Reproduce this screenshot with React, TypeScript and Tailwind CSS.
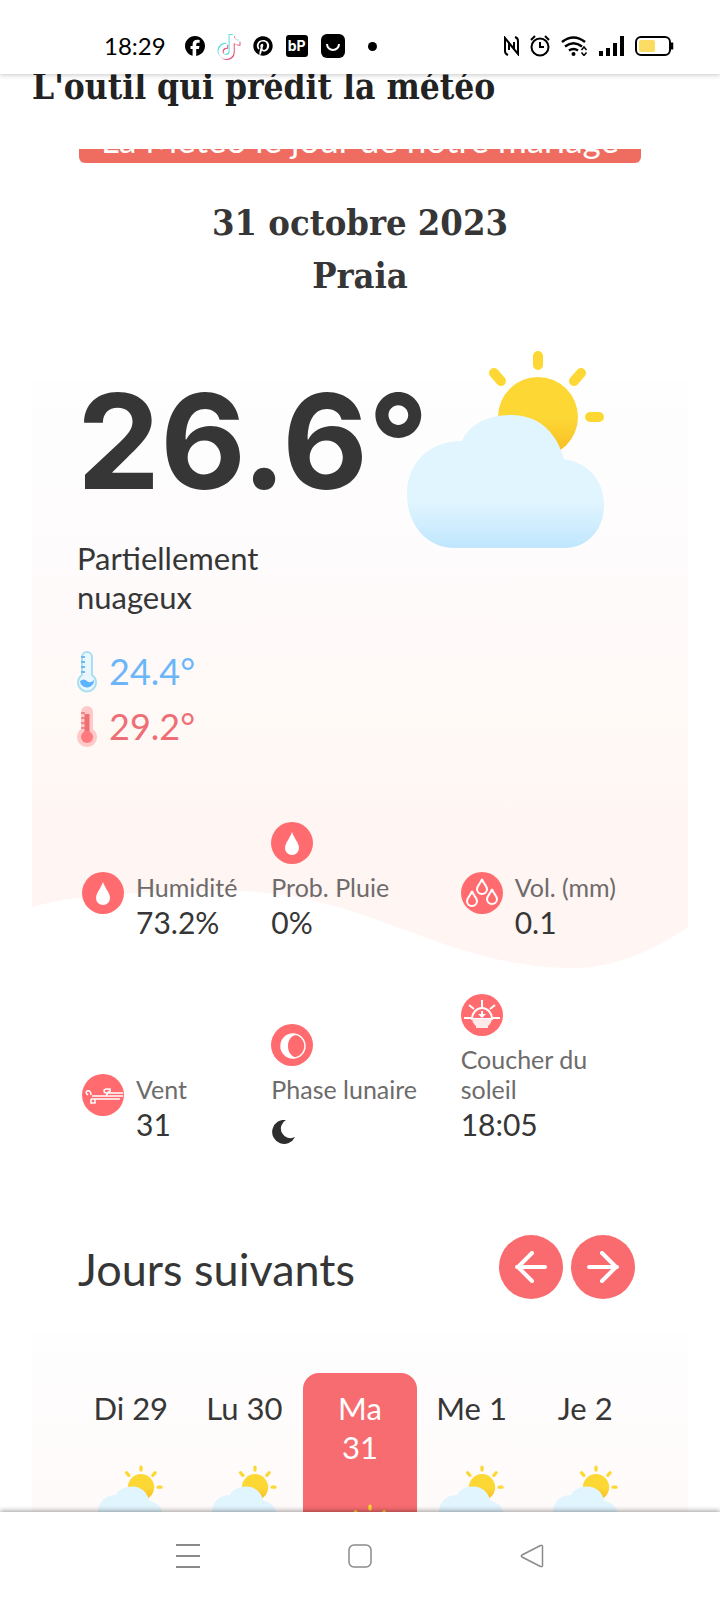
import { ReactNode, useId } from "react";
import { FaFacebook, FaPinterest, FaTiktok } from "react-icons/fa6";

const DAYS = [
  { name: "Di", date: 29 },
  { name: "Lu", date: 30 },
  { name: "Ma", date: 31, selected: true },
  { name: "Me", date: 1 },
  { name: "Je", date: 2 },
];

const WeatherIcon = ({ className }: { className: string }) => {
  const id = useId();

  return (
    <svg viewBox="0 0 198 200" className={className} aria-hidden="true">
      <defs>
        <linearGradient id={`${id}-sun`} x1="0" y1="0" x2="0" y2="1">
          <stop offset="0.5" stopColor="#fdd835" />
          <stop offset="1" stopColor="#f6bb22" />
        </linearGradient>
        <linearGradient id={`${id}-cloud`} x1="0" y1="0" x2="0" y2="1">
          <stop offset="0.65" stopColor="#e1f5fe" />
          <stop offset="1" stopColor="#bfe6fd" />
        </linearGradient>
      </defs>
      <g stroke="#fdd835" strokeWidth="10" strokeLinecap="round">
        <path d="M131 6v9M87 23l7 8M174 23l-7 8M183 67h9" />
      </g>
      <circle cx="131" cy="67" r="40" fill={`url(#${id}-sun)`} />
      <path
        d="M48 198C18 198 0 173 0 144C0 113 22 91 55 91C62 74 82 65 104 65C131 65 149 81 157 109C183 113 197 132 197 155C197 180 180 198 158 198Z"
        fill={`url(#${id}-cloud)`}
      />
    </svg>
  );
};

const ColdThermometer = () => (
  <svg viewBox="0 0 20 42" className="h-[42px] w-5" aria-hidden="true">
    <path
      d="M5 6a5 5 0 0 1 10 0v18a9 9 0 1 1-10 0z"
      fill="#e9f7fd"
      stroke="#a9dff0"
      strokeWidth="2"
    />
    <path d="M4 6h4M4 11h4M4 16h4M4 21h4" stroke="#6fb9f0" strokeWidth="2" />
    <path d="M3 30q4-3 7 0t7-1a7 7 0 1 1-14 1" fill="#5cb3ff" />
  </svg>
);

const HotThermometer = () => (
  <svg viewBox="0 0 20 42" className="h-[42px] w-5" aria-hidden="true">
    <path d="M4 6a6 6 0 0 1 12 0v17a10 10 0 1 1-12 0z" fill="#ffc9c9" />
    <path d="M4 7h4M4 12h4M4 17h4M4 22h4" stroke="#f08a8a" strokeWidth="2" />
    <path d="M10 8v22" stroke="#ee7073" strokeWidth="5" />
    <circle cx="10" cy="31" r="6" fill="#ff7a7e" />
  </svg>
);

const Badge = ({ children }: { children: ReactNode }) => (
  <svg
    viewBox="0 0 42 42"
    className="h-[42px] w-[42px] shrink-0"
    fill="none"
    stroke="white"
    aria-hidden="true"
  >
    <circle cx="21" cy="21" r="21" fill="#ff6b6e" stroke="none" />
    {children}
  </svg>
);

const DropBadge = () => (
  <Badge>
    <path
      d="M21 10c2 6 7 11 7 16a7 7 0 0 1-14 0c0-5 5-10 7-16z"
      fill="white"
      stroke="none"
    />
  </Badge>
);

const DropsBadge = () => (
  <Badge>
    <g strokeWidth="2">
      <path d="M21 7c1 4 5 7 5 10a5 5 0 0 1-10 0c0-3 4-6 5-10z" />
      <path d="M11 19c1 4 5 7 5 10a5 5 0 0 1-10 0c0-3 4-6 5-10z" />
      <path d="M31 17c1 4 5 7 5 10a5 5 0 0 1-10 0c0-3 4-6 5-10z" />
    </g>
  </Badge>
);

const WindBadge = () => (
  <Badge>
    <g strokeWidth="1.5">
      <path d="M41 19H25q-3 0-3-2t3-2h3v4M24 22l3-5" />
      <path d="M41 22H10M38 25H9M9 25v4h4v-4" />
      <path d="M6 21q-3-2-1-4 4-1 4 4" />
    </g>
  </Badge>
);

const MoonBadge = () => (
  <Badge>
    <circle cx="22" cy="22" r="12" strokeWidth="1.5" />
    <path
      d="M22 10a12 12 0 1 0 3 23.600C20 32 17 28 17 22s3-10 8-11z"
      fill="white"
      stroke="none"
    />
  </Badge>
);

const SunsetBadge = () => (
  <Badge>
    <g strokeWidth="2">
      <path d="M3 24h7M32 24h7M21 6v7M8 11l5 4M34 11l-5 4" />
      <path d="M11 25a10 11 0 0 1 20 0z" />
    </g>
    <path d="M20 17h2v3h3l-4 4-4-4h3z" fill="white" stroke="none" />
    <path d="M11 25h20q-1 5-4 7v2H15v-2q-3-2-4-7z" fill="#ffe9e9" stroke="none" />
  </Badge>
);

type MetricProps = {
  icon: ReactNode;
  label: string;
  value: ReactNode;
  stacked?: boolean;
};

const Metric = ({ icon, label, value, stacked }: MetricProps) => (
  <div className={stacked ? "flex flex-col gap-2" : "flex items-start gap-3"}>
    {icon}
    <dl>
      <dt className="max-w-40 text-[25px] leading-[30px] text-[#6e6b6b]">
        {label}
      </dt>
      <dd className="text-[30px] leading-10">{value}</dd>
    </dl>
  </div>
);

const StatusBar = () => (
  <header className="relative z-10 flex h-[74px] shrink-0 items-center justify-between bg-white pt-[18px] pr-[46px] pl-[104px] text-black shadow-[0_1px_5px_rgba(0,0,0,0.22)]">
    <div className="flex items-center gap-[13px]">
      <span className="mr-1.5 text-[24px] leading-6">18:29</span>
      <FaFacebook className="h-5 w-5" />
      <span className="relative h-6 w-[22px]">
        <FaTiktok className="absolute top-0 -left-px h-6 w-[22px] text-[#5be0dc]" />
        <FaTiktok className="absolute top-0.5 left-px h-6 w-[22px] text-[#e0557f]" />
        <FaTiktok className="absolute top-px left-0 h-6 w-[22px] text-white" />
      </span>
      <FaPinterest className="h-5 w-5" />
      <span className="flex h-[22px] w-[22px] items-center justify-center rounded-[3px] bg-black font-[Inter] text-[14px] leading-4 font-bold text-white">
        bP
      </span>
      <svg viewBox="0 0 24 24" className="h-6 w-6">
        <rect width="24" height="24" rx="6" />
        <path d="M6 10a6 6 0 0 0 12 0" fill="none" stroke="white" strokeWidth="2" />
      </svg>
      <span className="ml-2.5 h-[9px] w-[9px] rounded-full bg-black" />
    </div>

    <div className="flex items-center gap-[11px]">
      <svg viewBox="0 0 15 20" className="h-5 w-[15px]" fill="none" stroke="black" strokeWidth="2">
        <path d="M4 19Q1 18 1 15V2l9 11V6M11 1q3 1 3 4v13L5 7v7" />
      </svg>
      <svg viewBox="0 0 20 22" className="h-[22px] w-5" fill="none" stroke="black" strokeWidth="2">
        <circle cx="10" cy="12" r="8.500" />
        <path d="M10 7v5h4M1 5l4-4M19 5l-4-4" />
      </svg>
      <svg viewBox="0 0 27 20" className="h-5 w-[27px]" fill="none" stroke="black">
        <path d="M1 6q11.500-9 23 0M4 10.500q8.500-6.500 17 0M8 14.500q4.500-3 9 0" strokeWidth="2.500" />
        <circle cx="12.500" cy="18" r="2" fill="black" stroke="none" />
        <path d="M20.500 14l2.500-3 2.500 3M20.500 16.500l2.500 3 2.500-3" strokeWidth="1.500" />
      </svg>
      <svg viewBox="0 0 25 20" className="h-5 w-[25px]" stroke="black" strokeWidth="4">
        <path d="M2 20v-5M9 20v-8M16 20V7M23 20V0" />
      </svg>
      <svg viewBox="0 0 39 20" className="h-5 w-[39px]">
        <rect x="1" y="1" width="34" height="18" rx="5" fill="none" stroke="black" strokeWidth="2" />
        <rect x="4" y="4" width="16" height="12" rx="2" fill="#fbdc63" />
        <path d="M37 6.500v7" stroke="black" strokeWidth="2.500" />
      </svg>
    </div>
  </header>
);

const NavBar = () => (
  <nav className="relative z-10 flex h-[88px] shrink-0 items-center justify-center gap-[148px] bg-white text-[#8a8a8a] shadow-[0_-1px_5px_rgba(0,0,0,0.4)]">
    <button type="button" aria-label="Applications récentes">
      <svg viewBox="0 0 24 24" className="h-6 w-6" stroke="currentColor" strokeWidth="2">
        <path d="M0 1h24M0 12h24M0 23h24" />
      </svg>
    </button>
    <button type="button" aria-label="Accueil">
      <svg viewBox="0 0 24 24" className="h-6 w-6" fill="none" stroke="currentColor" strokeWidth="1.5">
        <rect x="1" y="1" width="22" height="22" rx="5" />
      </svg>
    </button>
    <button type="button" aria-label="Retour">
      <svg viewBox="0 0 24 24" className="h-6 w-6" fill="none" stroke="currentColor" strokeWidth="1.5">
        <path d="M22.500 2.500v19q0 1.500-2 1L2 13q-1.500-1 0-2L20.500 1.500q2-.500 2 1z" />
      </svg>
    </button>
  </nav>
);

const CurrentWeather = () => (
  <section className="relative mx-8 mt-[47px] text-[#363636]">
    <svg
      viewBox="0 0 656 590"
      preserveAspectRatio="none"
      className="absolute top-[30px] left-0 h-[590px] w-full"
      aria-hidden="true"
    >
      <defs>
        <linearGradient id="card-fill" x1="0" y1="0" x2="0" y2="1">
          <stop offset="0" stopColor="#fefefe" />
          <stop offset="0.25" stopColor="#fefcfd" />
          <stop offset="0.45" stopColor="#fff9f9" />
          <stop offset="0.6" stopColor="#fff9f6" />
          <stop offset="0.78" stopColor="#fff5f3" />
        </linearGradient>
      </defs>
      <path
        d="M0 0H656V547C615 575 575 590 530 588C405 583 330 511 200 511C120 511 50 513 0 527Z"
        fill="url(#card-fill)"
      />
    </svg>

    <div className="relative">
      <div className="flex pr-[83px] pl-[45px]">
        <div className="w-0 flex-1 pt-[26px]">
          <p className="font-[Inter] text-[132px] leading-[130px] font-bold whitespace-nowrap">
            26.6°
          </p>
          <p className="mt-[33px] w-60 text-[31px] leading-[39px]">
            Partiellement nuageux
          </p>
        </div>
        <WeatherIcon className="h-[200px] w-[198px] shrink-0" />
      </div>

      <ul className="mt-[27px] pl-[45px] text-[36px] leading-[55px]">
        <li className="flex items-center gap-3 text-[#6bb6f8]">
          <ColdThermometer />
          24.4°
        </li>
        <li className="flex items-center gap-3 text-[#ee6e75]">
          <HotThermometer />
          29.2°
        </li>
      </ul>

      <div className="mt-[68px] grid grid-cols-3 items-end gap-y-[52px] pr-[38px] pl-[50px]">
        <Metric icon={<DropBadge />} label="Humidité" value="73.2%" />
        <Metric icon={<DropBadge />} label="Prob. Pluie" value="0%" stacked />
        <Metric icon={<DropsBadge />} label="Vol. (mm)" value="0.1" />
        <Metric icon={<WindBadge />} label="Vent" value="31" />
        <Metric
          icon={<MoonBadge />}
          label="Phase lunaire"
          value={
            <span className="flex h-10 items-end">
              <svg viewBox="0 0 24 24" className="h-6 w-6" role="img" aria-label="Croissant de lune">
                <path d="M15 0A12 12 0 1 0 24 17A9.500 9.500 0 0 1 15 0z" fill="#2e2e2e" />
              </svg>
            </span>
          }
          stacked
        />
        <Metric icon={<SunsetBadge />} label="Coucher du soleil" value="18:05" stacked />
      </div>
    </div>
  </section>
);

const NextDays = () => (
  <section className="text-[#363636]">
    <div className="mt-[91px] flex items-center justify-between pr-[85px] pl-[78px]">
      <h2 className="pt-1 text-[45px] leading-[60px]">Jours suivants</h2>
      <div className="flex gap-2 text-white">
        <button
          type="button"
          aria-label="Jours précédents"
          className="flex h-16 w-16 items-center justify-center rounded-full bg-[#f96b6f]"
        >
          <svg viewBox="0 0 32 32" className="h-8 w-8" fill="none" stroke="currentColor" strokeWidth="4" strokeLinecap="round" strokeLinejoin="round">
            <path d="M30 16H2M17 2L3 16l14 14" />
          </svg>
        </button>
        <button
          type="button"
          aria-label="Jours suivants"
          className="flex h-16 w-16 items-center justify-center rounded-full bg-[#f96b6f]"
        >
          <svg viewBox="0 0 32 32" className="h-8 w-8" fill="none" stroke="currentColor" strokeWidth="4" strokeLinecap="round" strokeLinejoin="round">
            <path d="M2 16h28M15 2l14 14-14 14" />
          </svg>
        </button>
      </div>
    </div>

    <div className="mx-8 mt-[33px] grid grid-cols-5 bg-linear-to-b from-[#fefefe] to-[#fff9f8] px-11 pt-[41px]">
      {DAYS.map((day) => (
        <div
          key={day.name}
          className={
            day.selected
              ? "flex flex-col items-center rounded-t-2xl bg-[#f76c70] pt-4 text-white"
              : "flex flex-col items-center pt-4 pr-1"
          }
        >
          <p
            className={
              day.selected
                ? "w-12 text-center text-[31px] leading-[39px]"
                : "text-center text-[31px] leading-[39px]"
            }
          >
            {day.name} {day.date}
          </p>
          <WeatherIcon className="mt-[37px] h-[66px] w-[65px]" />
        </div>
      ))}
    </div>
  </section>
);

const App = () => (
  <div className="flex h-screen flex-col bg-white font-[Lato,sans-serif]">
    <StatusBar />
    <main className="min-h-0 flex-1 overflow-hidden">
      <h1 className="-mt-3 px-8 font-['DejaVu_Serif_Condensed','DejaVu_Serif',serif] text-[35px] leading-[50px] font-bold text-[#222]">
        L'outil qui prédit la météo
      </h1>

      <div className="mx-[79px] mt-[37px] flex h-3.5 items-end justify-center overflow-hidden rounded-b-md bg-[#ef6d60] pb-2">
        <p className="text-[35px] leading-8 whitespace-nowrap text-white">
          La Météo le jour de notre mariage
        </p>
      </div>

      <div className="mt-[33px] mb-12 text-center font-['DejaVu_Serif_Condensed','DejaVu_Serif',serif] text-[36px] leading-[53px] font-bold text-[#363636]">
        <p>31 octobre 2023</p>
        <p>Praia</p>
      </div>

      <CurrentWeather />
      <NextDays />
    </main>
    <NavBar />
  </div>
);

export default App;
